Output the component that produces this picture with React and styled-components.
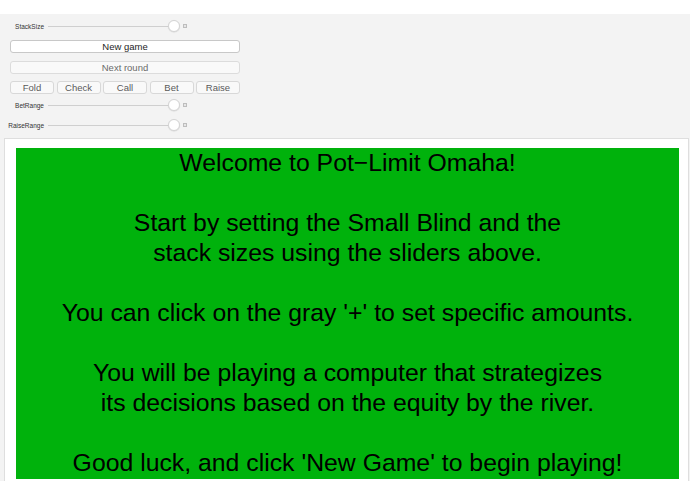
import React from "react";
import styled, { createGlobalStyle } from "styled-components";

const Global = createGlobalStyle`
  html, body { margin: 0; padding: 0; background: #ffffff; }
  body { font-family: "Liberation Sans", Arial, sans-serif; }
  * { box-sizing: border-box; }
`;

const Panel = styled.div`
  margin-top: 14px;
  width: 690px;
  height: 467px;
  background: #f3f3f3;
  overflow: hidden;
  display: flex;
  flex-direction: column;
`;

const Controls = styled.div`
  width: 240px;
  padding: 5px 0 0 0;
  display: flex;
  flex-direction: column;
`;

const SliderRow = styled.div`
  display: grid;
  grid-template-columns: 44px 1fr;
  align-items: center;
  height: 14px;
  margin-top: ${(p) => p.$mt || 0}px;
`;

const Label = styled.span`
  font-size: 6.5px;
  color: #333;
  text-align: right;
  white-space: nowrap;
`;

const SliderWrap = styled.div`
  position: relative;
  display: flex;
  align-items: center;
  height: 14px;
  margin-left: 4px;
`;

const Track = styled.div`
  width: 130px;
  height: 1px;
  background: #cfcfcf;
`;

const Thumb = styled.div`
  position: absolute;
  left: 120px;
  top: 1px;
  width: 12px;
  height: 12px;
  border-radius: 50%;
  background: #ffffff;
  border: 1px solid #d4d4d4;
  box-shadow: 0 0.5px 1px rgba(0, 0, 0, 0.12);
`;

const Plus = styled.div`
  width: 4px;
  height: 4px;
  margin-left: 5px;
  border: 1px solid #bdbdbd;
  background: #e6e6e6;
`;

const WideButton = styled.div`
  margin-left: 10px;
  width: 230px;
  height: 13px;
  margin-top: ${(p) => p.$mt}px;
  border-radius: 3px;
  border: 1px solid ${(p) => (p.$primary ? "#c8c8c8" : "#dcdcdc")};
  background: ${(p) => (p.$primary ? "#ffffff" : "#f9f9f9")};
  color: ${(p) => (p.$primary ? "#1e1e1e" : "#6a6a6a")};
  font-size: 9.5px;
  line-height: 11px;
  text-align: center;
`;

const ButtonBar = styled.div`
  margin-left: 10px;
  margin-top: 7px;
  width: 230px;
  display: grid;
  grid-template-columns: repeat(5, 1fr);
  gap: 2.5px;
`;

const ActionButton = styled.div`
  height: 13px;
  border-radius: 3px;
  border: 1px solid #d8d8d8;
  background: #f9f9f9;
  color: #5a5a5a;
  font-size: 9.5px;
  line-height: 11px;
  text-align: center;
`;

const Frame = styled.div`
  margin-top: 6px;
  margin-left: 4px;
  width: 685px;
  flex: 1;
  background: #ffffff;
  border: 1px solid #dedede;
  border-bottom: none;
  padding: 9px 9px 0 11px;
  display: flex;
  flex-direction: column;
`;

const Board = styled.div`
  background: #00b20c;
  height: 331px;
  color: #000;
  font-size: 24.8px;
  line-height: 30px;
  text-align: center;
  white-space: pre;
`;

const Line = styled.div`
  height: 30px;
`;

const lines = [
  "Welcome to Pot\u2212Limit Omaha!",
  "",
  "Start by setting the Small Blind and the",
  "stack sizes using the sliders above.",
  "",
  "You can click on the gray '+' to set specific amounts.",
  "",
  "You will be playing a computer that strategizes",
  "its decisions based on the equity by the river.",
  "",
  "Good luck, and click 'New Game' to begin playing!",
];

function Slider({ label, mt }) {
  return (
    <SliderRow $mt={mt}>
      <Label>{label}</Label>
      <SliderWrap>
        <Track />
        <Thumb />
        <Plus />
      </SliderWrap>
    </SliderRow>
  );
}

export default function App() {
  return (
    <>
      <Global />
      <Panel>
        <Controls>
          <Slider label="StackSize" mt={0} />
          <WideButton $primary $mt={7}>New game</WideButton>
          <WideButton $mt={8}>Next round</WideButton>
          <ButtonBar>
            {["Fold", "Check", "Call", "Bet", "Raise"].map((b) => (
              <ActionButton key={b}>{b}</ActionButton>
            ))}
          </ButtonBar>
          <Slider label="BetRange" mt={4} />
          <Slider label="RaiseRange" mt={6} />
        </Controls>
        <Frame>
          <Board>
            {lines.map((l, i) => (
              <Line key={i}>{l}</Line>
            ))}
          </Board>
        </Frame>
      </Panel>
    </>
  );
}
